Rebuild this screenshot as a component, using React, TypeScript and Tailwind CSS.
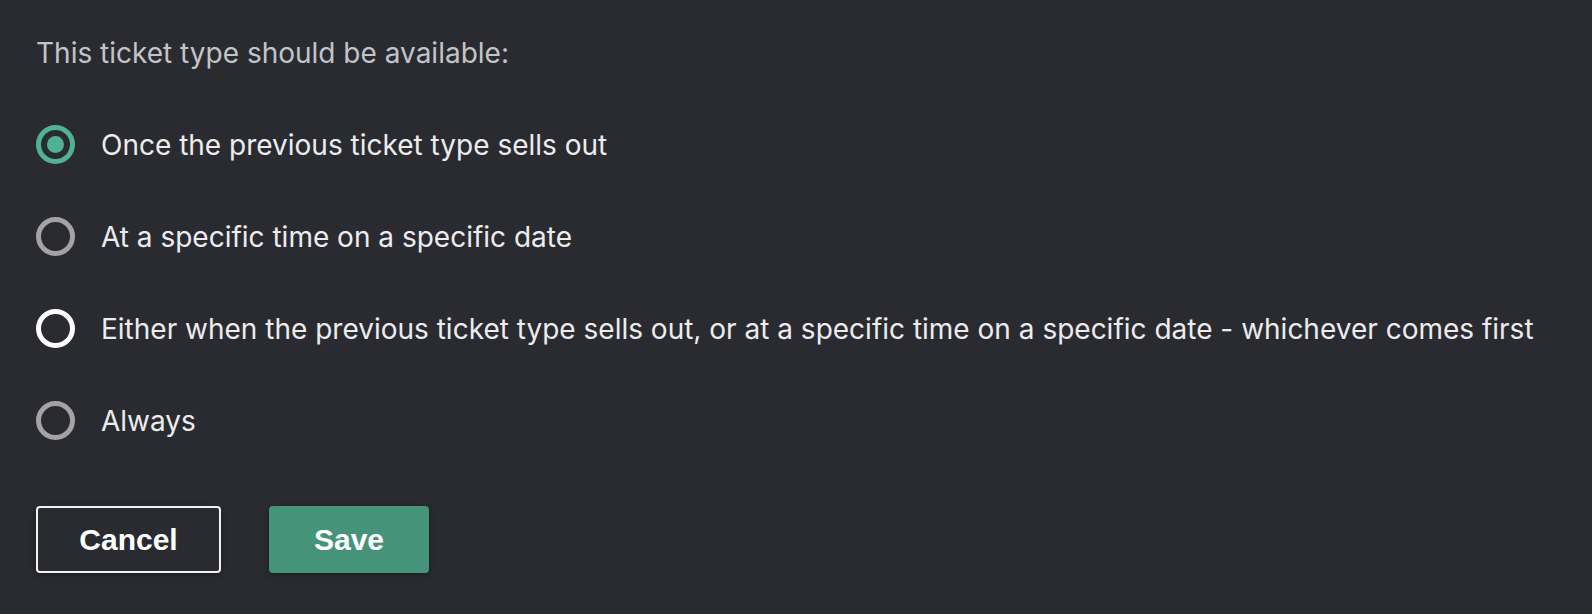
import React, { useState } from "react";

const options = [
  "Once the previous ticket type sells out",
  "At a specific time on a specific date",
  "Either when the previous ticket type sells out, or at a specific time on a specific date - whichever comes first",
  "Always",
];

function Radio({ checked, focused }: { checked: boolean; focused: boolean }) {
  if (checked) {
    return (
      <span className="flex h-[39px] w-[39px] shrink-0 items-center justify-center rounded-full border-[5px] border-[#4fb393]">
        <span className="h-[17px] w-[17px] rounded-full bg-[#4fb393]" />
      </span>
    );
  }
  return (
    <span
      className={
        focused
          ? "h-[39px] w-[39px] shrink-0 rounded-full border-[5px] border-white"
          : "h-[39px] w-[39px] shrink-0 rounded-full border-[5px] border-[#a3a3a5]"
      }
    />
  );
}

export default function App() {
  const [selected, setSelected] = useState(0);
  return (
    <div className="h-[614px] w-full bg-[#2a2b30] pl-[36px] pt-[36px] font-['Inter',sans-serif]">
      <p className="text-[28px] leading-[34px] text-[#c3c4c8]">This ticket type should be available:</p>
      <div className="mt-[55px] flex flex-col gap-[53px]">
        {options.map((label, i) => (
          <label key={label} className="flex h-[39px] cursor-pointer items-center gap-[26px]" onClick={() => setSelected(i)}>
            <Radio checked={selected === i} focused={i === 2} />
            <span className="text-[28px] leading-[34px] text-[#ececee]">{label}</span>
          </label>
        ))}
      </div>
      <div className="mt-[66px] flex gap-[48px] font-['Liberation_Sans',sans-serif]">
        <button className="h-[67px] w-[185px] rounded-[4px] border-2 border-[#f2f2f2] text-[30px] font-bold text-white shadow-[0_2px_6px_rgba(0,0,0,0.35)]">
          Cancel
        </button>
        <button className="h-[67px] w-[160px] rounded-[4px] bg-[#45947a] text-[30px] font-bold text-white shadow-[0_2px_6px_rgba(0,0,0,0.35)]">
          Save
        </button>
      </div>
    </div>
  );
}
